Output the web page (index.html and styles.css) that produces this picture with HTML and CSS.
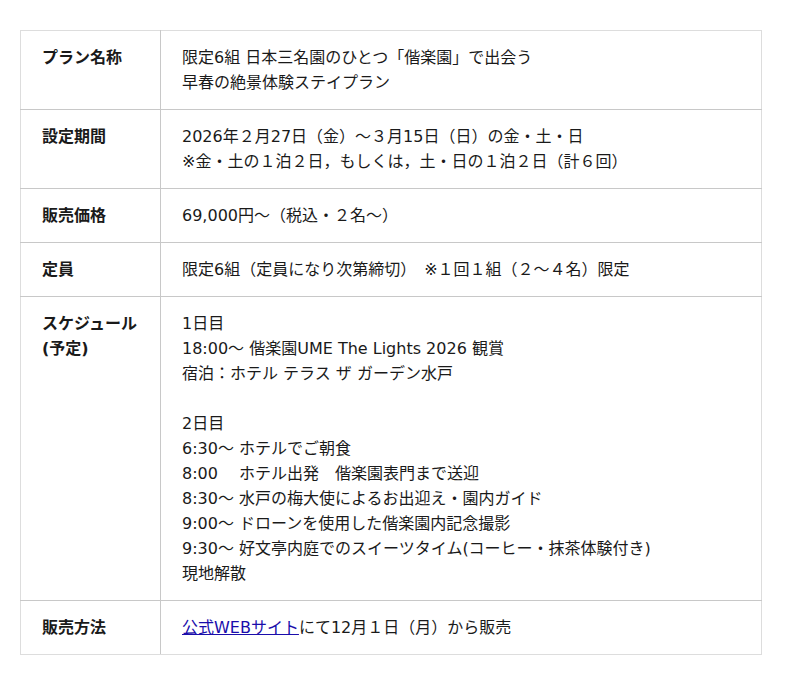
FILE: index.html
```html
<!DOCTYPE html>
<html lang="ja">
<head>
<meta charset="utf-8">
<link rel="stylesheet" href="styles.css">
</head>
<body>
<div class="wrap">
<table class="plan">
<tr>
<th>プラン名称</th>
<td>限定6組 日本三名園のひとつ「偕楽園」で出会う<br>早春の絶景体験ステイプラン</td>
</tr>
<tr>
<th>設定期間</th>
<td>2026年２月27日（金）～３月15日（日）の金・土・日<br>※金・土の１泊２日，もしくは，土・日の１泊２日（計６回）</td>
</tr>
<tr>
<th>販売価格</th>
<td>69,000円～（税込・２名～）</td>
</tr>
<tr>
<th>定員</th>
<td>限定6組（定員になり次第締切）　※１回１組（２～４名）限定</td>
</tr>
<tr>
<th>スケジュール<br>(予定)</th>
<td>1日目<br>18:00～ 偕楽園UME The Lights 2026 観賞<br>宿泊：ホテル テラス ザ ガーデン水戸<br><br>2日目<br>6:30～ ホテルでご朝食<br>8:00　 ホテル出発　偕楽園表門まで送迎<br>8:30～ 水戸の梅大使によるお出迎え・園内ガイド<br>9:00～ ドローンを使用した偕楽園内記念撮影<br>9:30～ 好文亭内庭でのスイーツタイム(コーヒー・抹茶体験付き)<br>現地解散</td>
</tr>
<tr>
<th>販売方法</th>
<td><a href="#">公式WEBサイト</a>にて12月１日（月）から販売</td>
</tr>
</table>
</div>
</body>
</html>
```

FILE: styles.css
```css
html, body {
  margin: 0;
  padding: 0;
  background: #fff;
}
.wrap {
  padding: 30px 38px 30px 20px;
}
.plan {
  width: 742px;
  border-collapse: collapse;
  border: 1px solid #ddd;
  font-family: "DejaVu Sans", "Noto Sans CJK JP", sans-serif;
  font-size: 16px;
  line-height: 25px;
  color: #1a1a1a;
}
.plan th,
.plan td {
  border-top: 1px solid #c8c8c8;
  border-bottom: 1px solid #c8c8c8;
  padding: 14px 21px;
  vertical-align: top;
  text-align: left;
}
.plan th {
  width: 97px;
  font-weight: bold;
  border-right: 1px solid #c8c8c8;
}
.plan tr:first-child th,
.plan tr:first-child td {
  border-top-color: #ddd;
}
.plan tr:last-child th,
.plan tr:last-child td {
  border-bottom-color: #ddd;
}
.plan a {
  color: #1a0dab;
  text-decoration: underline;
}
```
